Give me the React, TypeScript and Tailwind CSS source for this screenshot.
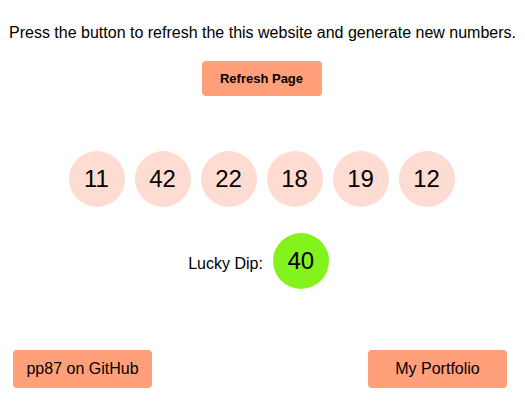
const numbers = [11, 42, 22, 18, 19, 12];

export default function App() {
  return (
    <div className="w-[525px] h-[404px] bg-white text-black font-['Liberation_Sans',Arial,sans-serif] flex flex-col items-center">
      <p className="mt-[24px] text-[16px] leading-[18px]">
        Press the button to refresh the this website and generate new numbers.
      </p>
      <button className="mt-[19px] mr-[2px] w-[120px] h-[35px] rounded-[4px] bg-[#ffa07a] text-[13px] font-bold">
        Refresh Page
      </button>

      <div className="mt-[55px] flex gap-[10px] mr-[2px]">
        {numbers.map((n, i) => (
          <div
            key={i}
            className="w-[56px] h-[56px] rounded-full bg-[#ffdcd2] flex items-center justify-center text-[24px]"
          >
            {n}
          </div>
        ))}
      </div>

      <div className="mt-[26px] flex items-center gap-[10px] mr-[8px]">
        <span className="text-[16px] mt-[6px]">Lucky Dip:</span>
        <div className="w-[56px] h-[56px] rounded-full bg-[#84f21c] flex items-center justify-center text-[24px]">
          40
        </div>
      </div>

      <div className="mt-[61px] w-full flex justify-between pl-[13px] pr-[18px]">
        <button className="w-[139px] h-[38px] rounded-[4px] bg-[#ffa07a] text-[16px]">
          pp87 on GitHub
        </button>
        <button className="w-[139px] h-[38px] rounded-[4px] bg-[#ffa07a] text-[16px]">
          My Portfolio
        </button>
      </div>
    </div>
  );
}
